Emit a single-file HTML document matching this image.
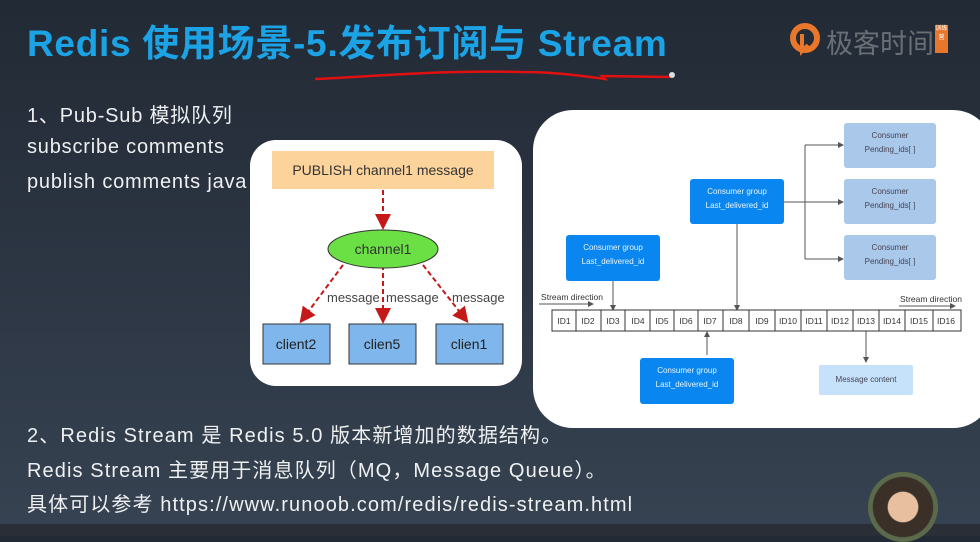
<!DOCTYPE html><html><head><meta charset="utf-8"><style>
body{margin:0;width:980px;height:536px;overflow:hidden;position:relative;background:linear-gradient(180deg,#222a35 0%,#2a3340 40%,#374352 100%);font-family:"Liberation Sans","Noto Sans CJK SC",sans-serif;color:#eef0f2}
.t{position:absolute;white-space:nowrap}
h1{position:absolute;left:27px;top:13px;margin:0;font-size:37px;color:#1ba3e6;font-weight:bold;letter-spacing:0.7px}
.box{position:absolute;background:#fff}
.d{position:absolute;box-sizing:border-box;font-size:8px;text-align:center;line-height:14px}
.cg{background:#0a86f0;color:#e8f4ff;border-radius:3px;padding-top:6px}
.cs{background:#a9c8ea;color:#445;border-radius:3px;padding-top:6px}
.a{font-size:20px;letter-spacing:0.8px}
.b{font-size:20px;letter-spacing:1.1px}
</style></head><body>
<h1>Redis 使用场景-5.发布订阅与 Stream</h1>
<svg style="position:absolute;left:0;top:0" width="980" height="90"><path d="M315 79 C380 76 440 70 520 72 C560 72 590 77 605 79 L602 76 L670 77" stroke="#e01010" stroke-width="2.5" fill="none"/><circle cx="672" cy="75" r="3" fill="#ddd"/></svg>
<svg style="position:absolute;left:788px;top:22px" width="40" height="40"><circle cx="17" cy="16" r="12" fill="none" stroke="#e8762b" stroke-width="6"/><path d="M14 12v17l6 -6" stroke="#e8762b" stroke-width="4" fill="none"/></svg>
<div class="t" style="left:826px;top:22px;font-size:27px;color:#6a6e75">极客时间</div>
<div class="t" style="left:935px;top:25px;width:13px;height:28px;background:#e8762b;font-size:6px;line-height:9px;color:#fff;text-align:center;white-space:normal">训练营</div>
<div class="t a" style="left:27px;top:99px">1、Pub-Sub 模拟队列</div>
<div class="t a" style="left:27px;top:136px">subscribe comments</div>
<div class="t a" style="left:27px;top:171px">publish comments java</div>
<div class="box" style="left:250px;top:140px;width:272px;height:246px;border-radius:26px"></div>
<div class="d" style="left:272px;top:151px;width:222px;height:38px;background:#fcd39a;color:#333;font-size:14px;line-height:38px">PUBLISH channel1 message</div>
<svg style="position:absolute;left:250px;top:140px" width="272" height="246">
<defs><marker id="a" markerWidth="8" markerHeight="8" refX="6" refY="4" orient="auto"><path d="M0 0L8 4L0 8z" fill="#c51818"/></marker></defs>
<g stroke="#c51818" stroke-width="2" stroke-dasharray="5 3" fill="none" marker-end="url(#a)">
<path d="M133 50V86"/><path d="M93 125L52 180"/><path d="M133 125V180"/><path d="M173 125L216 180"/></g>
<ellipse cx="133" cy="109" rx="55" ry="19" fill="#6be045" stroke="#333" stroke-width="1"/>
<text x="133" y="114" font-size="14" text-anchor="middle" fill="#333" font-family="Liberation Sans">channel1</text>
<text x="77" y="162" font-size="13" fill="#444" font-family="Liberation Sans">message</text>
<text x="136" y="162" font-size="13" fill="#444" font-family="Liberation Sans">message</text>
<text x="202" y="162" font-size="13" fill="#444" font-family="Liberation Sans">message</text>
<g fill="#7fb7ec" stroke="#333"><rect x="13" y="184" width="67" height="40"/><rect x="99" y="184" width="67" height="40"/><rect x="186" y="184" width="67" height="40"/></g>
<g font-size="14" fill="#222" text-anchor="middle" font-family="Liberation Sans"><text x="46" y="209">client2</text><text x="132" y="209">clien5</text><text x="219" y="209">clien1</text></g>
</svg>
<div class="box" style="left:533px;top:110px;width:460px;height:318px;border-radius:40px"></div>
<svg style="position:absolute;left:533px;top:110px" width="447" height="318">
<defs><marker id="k" markerWidth="6" markerHeight="6" refX="5" refY="3" orient="auto"><path d="M0 0L6 3L0 6z" fill="#555"/></marker></defs>
<g stroke="#555" stroke-width="1" fill="none" marker-end="url(#k)">
<path d="M80 171V200"/><path d="M204 114V200"/><path d="M174 245V222"/><path d="M333 221V252"/>
<path d="M251 92H310"/><path d="M272 35H310"/><path d="M272 149H310"/>
<path d="M6 194H60"/><path d="M366 196H422"/>
</g>
<path d="M272 35V149" stroke="#555" fill="none"/>
<rect x="19" y="200" width="409" height="21" fill="#fff" stroke="#333"/>
<g font-size="8.5" fill="#333" text-anchor="middle" font-family="Liberation Sans">
<text x="31" y="214">ID1</text><text x="55" y="214">ID2</text><text x="80" y="214">ID3</text><text x="105" y="214">ID4</text><text x="129" y="214">ID5</text><text x="153" y="214">ID6</text><text x="177" y="214">ID7</text><text x="203" y="214">ID8</text><text x="229" y="214">ID9</text><text x="255" y="214">ID10</text><text x="281" y="214">ID11</text><text x="307" y="214">ID12</text><text x="333" y="214">ID13</text><text x="359" y="214">ID14</text><text x="386" y="214">ID15</text><text x="413" y="214">ID16</text>
<text x="39" y="190" font-size="8.5">Stream direction</text><text x="398" y="192" font-size="8.5">Stream direction</text></g>
<g stroke="#333"><path d="M43 200v21M68 200v21M92 200v21M117 200v21M141 200v21M165 200v21M190 200v21M216 200v21M242 200v21M268 200v21M294 200v21M320 200v21M346 200v21M372 200v21M400 200v21"/></g>
</svg>
<div class="d cs" style="left:844px;top:123px;width:92px;height:45px">Consumer<br>Pending_ids[ ]</div>
<div class="d cs" style="left:844px;top:179px;width:92px;height:45px">Consumer<br>Pending_ids[ ]</div>
<div class="d cs" style="left:844px;top:235px;width:92px;height:45px">Consumer<br>Pending_ids[ ]</div>
<div class="d cg" style="left:690px;top:179px;width:94px;height:45px">Consumer group<br>Last_delivered_id</div>
<div class="d cg" style="left:566px;top:235px;width:94px;height:46px">Consumer group<br>Last_delivered_id</div>
<div class="d cg" style="left:640px;top:358px;width:94px;height:46px">Consumer group<br>Last_delivered_id</div>
<div class="d" style="left:819px;top:365px;width:94px;height:30px;background:#c6e2fb;color:#445;line-height:30px;border-radius:2px">Message content</div>
<div class="t b" style="left:27px;top:419px">2、Redis Stream 是 Redis 5.0 版本新增加的数据结构。</div>
<div class="t b" style="left:27px;top:454px">Redis Stream 主要用于消息队列（MQ，Message Queue）。</div>
<div class="t b" style="left:27px;top:488px">具体可以参考 https://www.runoob.com/redis/redis-stream.html</div>
<div style="position:absolute;left:0;top:524px;width:980px;height:12px;background:#2a2f37"></div>
<div style="position:absolute;left:868px;top:472px;width:70px;height:70px;border-radius:50%;background:radial-gradient(circle at 50% 50%,#e8c0a0 0 30%,#3a3028 32% 60%,#5a6a4a 62%)"></div>
</body></html>
